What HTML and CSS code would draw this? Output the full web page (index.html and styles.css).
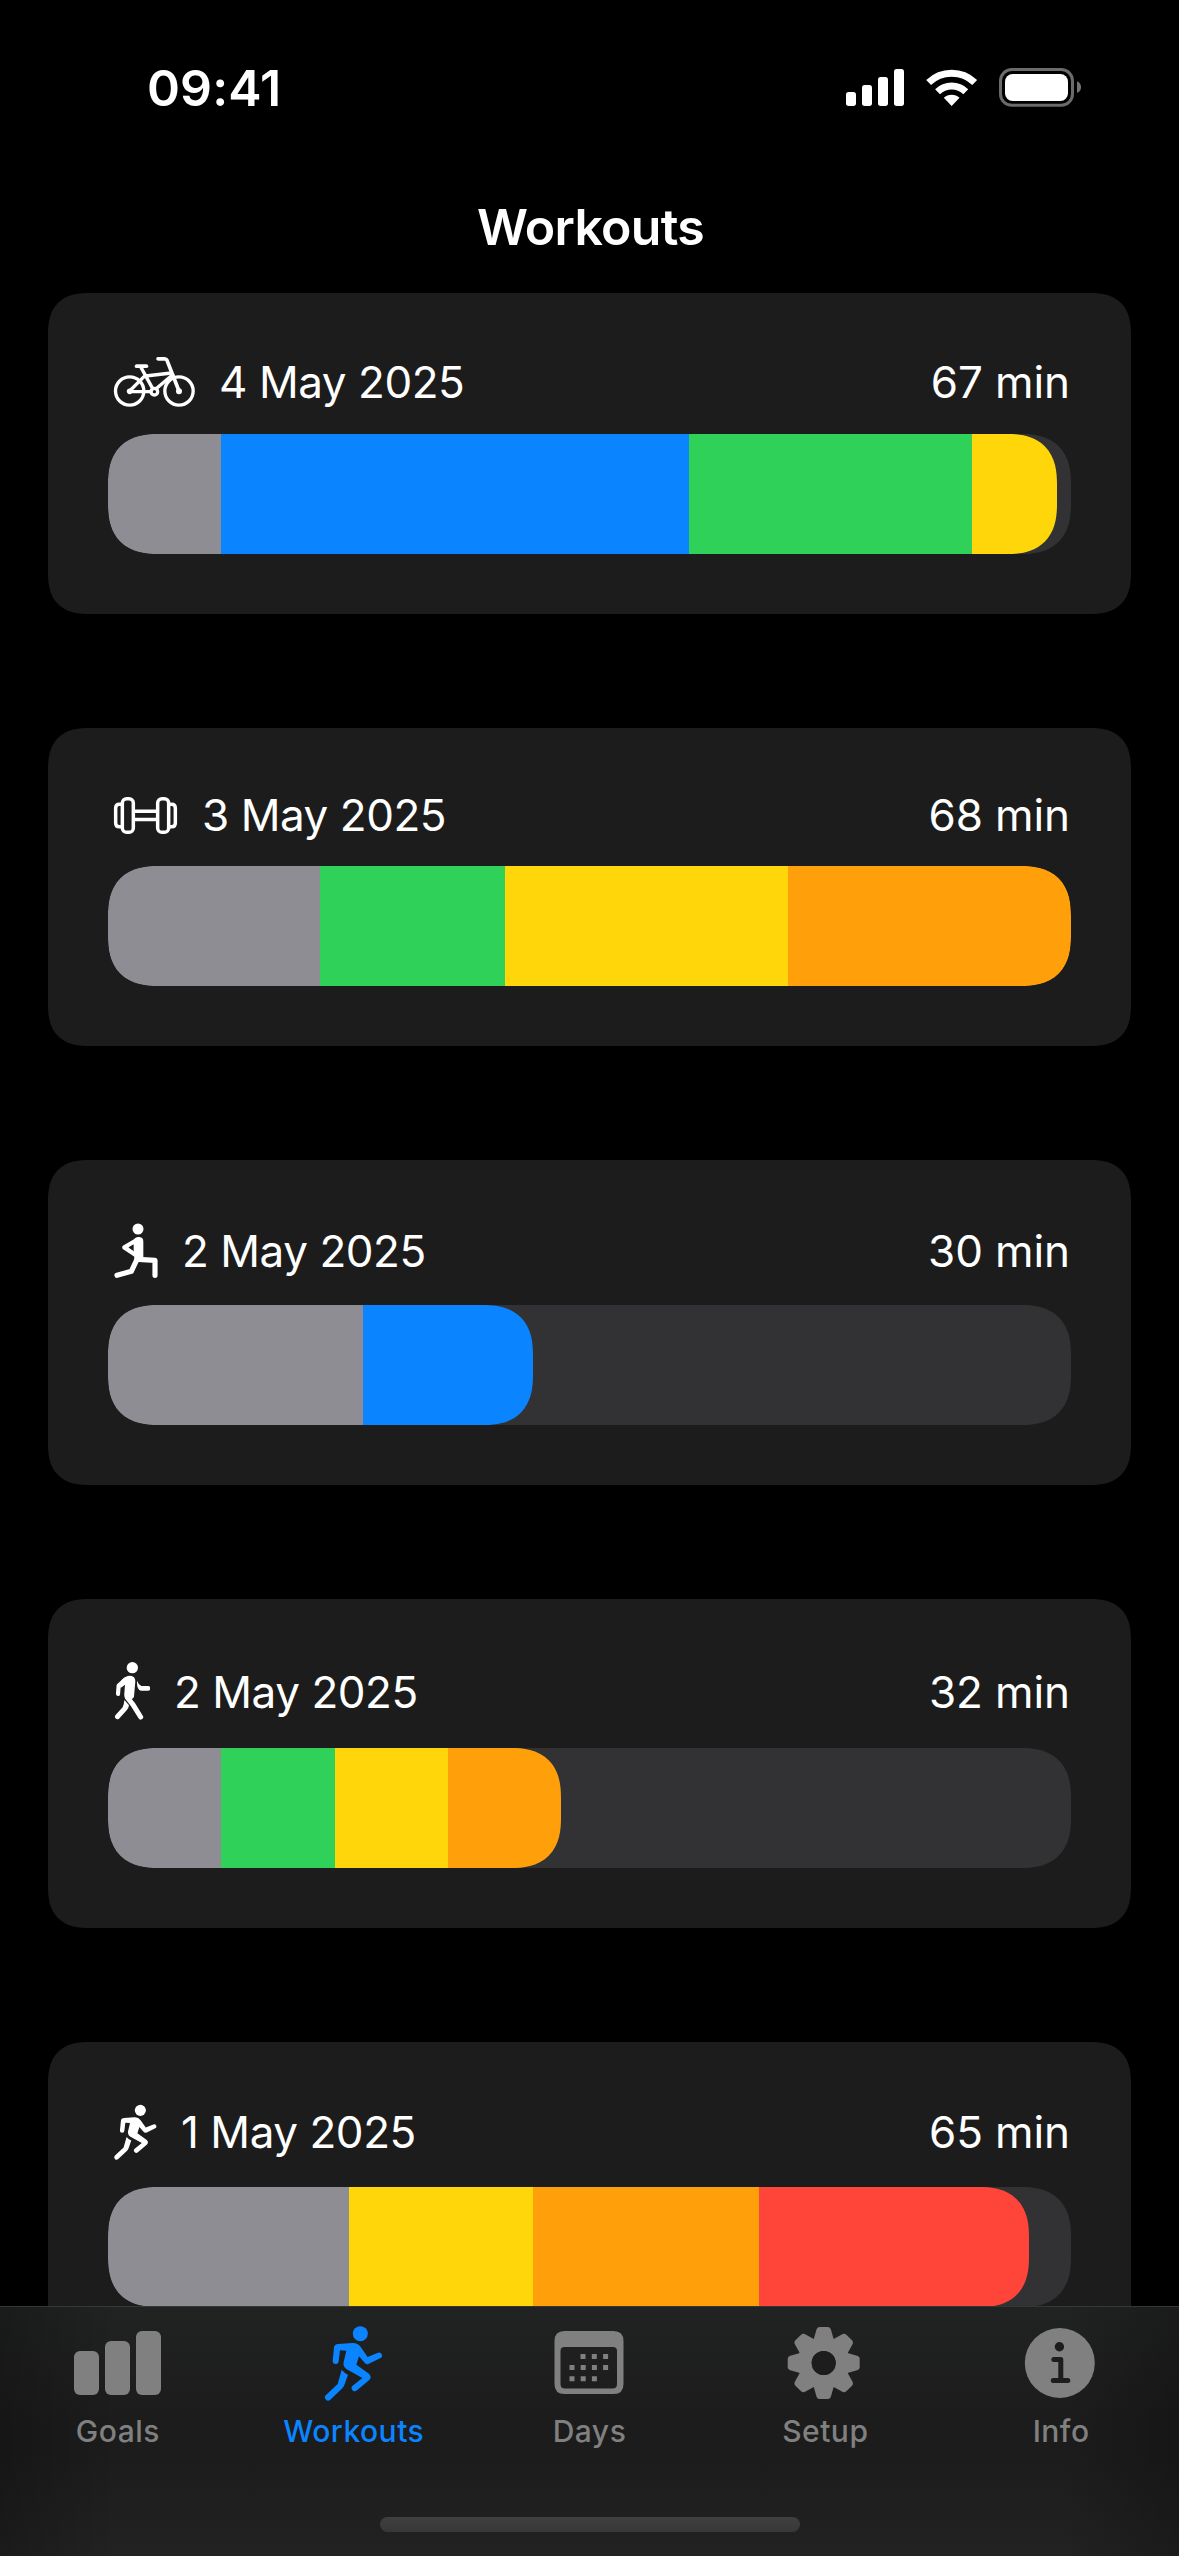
FILE: index.html
```html
<!DOCTYPE html>
<html lang="en">
<head>
<meta charset="utf-8">
<title>Workouts</title>
<link rel="stylesheet" href="styles.css">
</head>
<body>
<svg width="0" height="0" class="defs">
  <symbol id="runner" viewBox="768.6 36 199 248">
    <circle cx="900" cy="70" r="22.5"/>
    <path d="M817 152 L821 112 Q822 101 834 101 L876 98 Q892 97 901 110 L922 140 L953 127 a9 9 0 0 1 8 16 L924 161 Q918 163 913 157 L896 138 L888 163 L926 190 Q936 200 926 210 L890 240 a9.500 9.500 0 0 1 -13 -14 L906 203 L858 176 Q847 168 850 155 L858 121 L839 120 L835 152 a9 9 0 0 1 -18 0Z"/>
    <path d="M844 178 Q852 188 863 193 L853 222 Q851 229 846 234 L810 268 a9.500 9.500 0 0 1 -13 -14 L832 221Z"/>
  </symbol>
</svg>
<div class="screen">
  <header class="status">
    <span class="time">09:41</span>
    <svg class="indicators" viewBox="45 51 714 123">
      <g fill="#fff">
        <rect x="48" y="126" width="30" height="42" rx="8"/>
        <rect x="96" y="105" width="30" height="63" rx="8"/>
        <rect x="144" y="81" width="30" height="87" rx="8"/>
        <rect x="192" y="57" width="30" height="111" rx="8"/>
        <path d="M365 168 L341.400 143.500 A34 34 0 0 1 388.600 143.500Z"/>
        <rect x="525" y="72" width="189" height="81" rx="23"/>
      </g>
      <g fill="none" stroke="#fff" stroke-width="21">
        <path d="M295.900 97.500 A100 100 0 0 1 434.100 97.500"/>
        <path d="M322.600 125 A61 61 0 0 1 407.400 125"/>
      </g>
      <rect x="511.500" y="58.500" width="216" height="107.500" rx="34" fill="none" stroke="#6b6b6b" stroke-width="9"/>
      <path d="M741 94 Q753 99 753 111.500 T741 129Z" fill="#737373"/>
    </svg>
  </header>
  <h1 class="title">Workouts</h1>

  <main class="list">
    <section class="card">
      <div class="head">
        <svg class="bike" viewBox="204 219 261 171">
          <g fill="none" stroke="#fff" stroke-width="10" stroke-linecap="round" stroke-linejoin="round">
            <circle cx="269" cy="333" r="42.500"/><circle cx="417" cy="333" r="42.500"/>
            <circle cx="343" cy="335" r="10"/>
            <path d="M269 335 H333 M269 333 L315 287 M303 262 L338 326 M317 288 L394 279 M350 325 L398 284"/>
            <path d="M354 236.500 H374 Q379 236.500 381 241 L417 333" stroke-width="11"/>
            <path d="M290 258.500 H319" stroke-width="11.500"/>
          </g>
          <circle cx="269" cy="334" r="8.500" fill="#fff"/><circle cx="417" cy="334" r="9" fill="#fff"/>
        </svg>
        <span class="date">4 May 2025</span><span class="mins">67 min</span>
      </div>
      <div class="track"><div class="fill">
        <i class="gray" style="width:113.3px"></i><i class="blue" style="width:467.3px"></i><i class="green" style="width:283.3px"></i><i class="yellow" style="width:85px"></i>
      </div></div>
    </section>

    <section class="card">
      <div class="head">
        <svg class="dumbbell" viewBox="54 204 210 162">
          <g fill="none" stroke="#fff" stroke-width="10.500">
            <rect x="97" y="236" width="33" height="101" rx="13"/>
            <rect x="203" y="236" width="33" height="101" rx="13"/>
            <path d="M96 252.500 H88 Q77 252.500 77 264 V309 Q77 320.500 88 320.500 H96"/>
            <path d="M237 252.500 H245 Q256 252.500 256 264 V309 Q256 320.500 245 320.500 H237"/>
            <path d="M131 274 H202 M131 298.500 H202"/>
          </g>
        </svg>
        <span class="date">3 May 2025</span><span class="mins">68 min</span>
      </div>
      <div class="track"><div class="fill">
        <i class="gray" style="width:212.4px"></i><i class="green" style="width:184.3px"></i><i class="yellow" style="width:283.1px"></i><i class="orange" style="width:283.2px"></i>
      </div></div>
    </section>

    <section class="card">
      <div class="head">
        <svg class="lunge" viewBox="54 60 150 183">
          <g fill="none" stroke="#fff" stroke-width="15.500" stroke-linecap="round" stroke-linejoin="round">
            <path d="M142 176 L124 214 L81 226"/>
            <path d="M146 178 L195 181 V226"/>
            <path d="M143 119 L103 142 L137 165" stroke-width="13"/>
          </g>
          <path fill="#fff" d="M131 120 Q136 110 148 111 Q160 112 160 125 V180 L132 186 L133 171 L131 150 Z"/>
          <circle cx="144" cy="87" r="16.500" fill="#fff"/>
          <path fill="#1c1c1c" d="M117 142 L129 134.500 V151Z"/>
        </svg>
        <span class="date">2 May 2025</span><span class="mins">30 min</span>
      </div>
      <div class="track"><div class="fill">
        <i class="gray" style="width:254.9px"></i><i class="blue" style="width:170px"></i>
      </div></div>
    </section>

    <section class="card">
      <div class="head">
        <svg class="walk" viewBox="54 57 126 195">
          <g fill="none" stroke="#fff" stroke-width="14" stroke-linecap="round" stroke-linejoin="round">
            <path d="M84 162 L86 137 L107 118" stroke-width="12.500"/>
            <path d="M113 174 L129 194 L152 231" stroke-width="15"/>
          </g>
          <path fill="#fff" d="M94 121 Q106 107 120 107 Q136 108 136 124 L132 170 Q126 182 110 180 Q101 174 103 160 L105 134 L91 145 Z"/>
          <path fill="#fff" d="M142 124 Q145 134 154 138 H174 a7 7 0 0 1 0 14 H153 Q140 150 141 124Z"/>
          <path fill="#fff" d="M103 180 L117 196 Q116 205 110 211 L87 236 a7.500 7.500 0 0 1 -11 -10 L98 202 Q102 195 103 180Z"/>
          <circle cx="127" cy="83" r="17" fill="#fff"/>
        </svg>
        <span class="date">2 May 2025</span><span class="mins">32 min</span>
      </div>
      <div class="track"><div class="fill">
        <i class="gray" style="width:113.3px"></i><i class="green" style="width:113.3px"></i><i class="yellow" style="width:113.3px"></i><i class="orange" style="width:113.3px"></i>
      </div></div>
    </section>

    <section class="card">
      <div class="head raised">
        <svg class="run"><use href="#runner"/></svg>
        <span class="date">1 May 2025</span><span class="mins">65 min</span>
      </div>
      <div class="track"><div class="fill">
        <i class="gray" style="width:240.8px"></i><i class="yellow" style="width:184.1px"></i><i class="orange" style="width:226.6px"></i><i class="red" style="width:269.5px"></i>
      </div></div>
    </section>
  </main>

  <nav class="tabs">
    <a class="tab">
      <svg viewBox="76 2321 84 84">
        <rect x="74" y="2351" width="25" height="44" rx="6"/><rect x="105" y="2341" width="25" height="54" rx="6"/><rect x="136" y="2331" width="25" height="64" rx="6"/>
      </svg>
      <span>Goals</span>
    </a>
    <a class="tab active">
      <svg viewBox="755 32 252 252">
        <circle cx="900" cy="70" r="22.500"/>
        <path d="M817 152 L821 112 Q822 101 834 101 L876 98 Q892 97 901 110 L922 140 L953 127 a9 9 0 0 1 8 16 L924 161 Q918 163 913 157 L896 138 L888 163 L926 190 Q936 200 926 210 L890 240 a9.500 9.500 0 0 1 -13 -14 L906 203 L858 176 Q847 168 850 155 L858 121 L839 120 L835 152 a9 9 0 0 1 -18 0Z"/>
        <path d="M844 178 Q852 188 863 193 L853 222 Q851 229 846 234 L810 268 a9.500 9.500 0 0 1 -13 -14 L832 221Z"/>
      </svg>
      <span>Workouts</span>
    </a>
    <a class="tab">
      <svg viewBox="547.5 2321 84 84">
        <path fill-rule="evenodd" d="M565 2331 H614 Q624 2331 624 2341 V2384 Q624 2394 614 2394 H565 Q555 2394 555 2384 V2341 Q555 2331 565 2331Z M565 2347 Q561 2347 561 2351 V2384 Q561 2388.500 565.500 2388.500 H613 Q617.500 2388.500 617.500 2384 V2351 Q617.500 2347 613.500 2347Z"/>
        <path stroke-width="5" stroke="#808080" d="M581 2356.500h5m6.300 0h5m6.300 0h5 M570 2367.500h5m6.200 0h5m6.200 0h5m6.200 0h5 M570 2378.700h5m6.200 0h5m6.200 0h5"/>
      </svg>
      <span>Days</span>
    </a>
    <a class="tab">
      <svg viewBox="-40.7 -42 84 84">
        <path id="tooth" d="M-10.500 -22 L-7.500 -32.500 Q-6.800 -36 -4 -36 H4 Q6.800 -36 7.500 -32.500 L10.500 -22Z"/>
        <use href="#tooth" transform="rotate(45)"/><use href="#tooth" transform="rotate(90)"/><use href="#tooth" transform="rotate(135)"/><use href="#tooth" transform="rotate(180)"/><use href="#tooth" transform="rotate(225)"/><use href="#tooth" transform="rotate(270)"/><use href="#tooth" transform="rotate(315)"/>
        <circle r="19" fill="none" stroke="#808080" stroke-width="14"/>
        <circle r="12" class="hole"/>
      </svg>
      <span>Setup</span>
    </a>
    <a class="tab">
      <svg viewBox="1019.2 2321 84 84">
        <circle cx="1060" cy="2363" r="35"/>
        <circle cx="1059.600" cy="2346.700" r="4.700" class="hole"/>
        <path class="cut" d="M1054 2359.500 H1061 V2380.500 M1053.500 2380.500 H1068"/>
      </svg>
      <span>Info</span>
    </a>
    <div class="home"></div>
  </nav>
</div>
</body>
</html>
```

FILE: styles.css
```css
* { box-sizing: border-box; }
body {
  margin: 0;
  background: #000;
  color: #fff;
  font-family: Inter, "Liberation Sans", sans-serif;
}
svg { display: block; flex: none; }
.defs { display: none; }
.screen {
  width: 1179px;
  height: 2556px;
  display: flex;
  flex-direction: column;
  overflow: hidden;
}
.status {
  flex: none;
  height: 175px;
  padding: 0 96px 0 147px;
  display: flex;
  align-items: center;
  justify-content: space-between;
}
.time { font-size: 50px; font-weight: 600; letter-spacing: 0.1px; }
.indicators { width: 238px; height: 41px; }
.title {
  flex: none;
  margin: 0;
  height: 118px;
  padding: 22px 0 0 2px;
  font-size: 50px;
  font-weight: 600;
  line-height: 60px;
  letter-spacing: -0.7px;
  text-align: center;
}
.list {
  flex: 1;
  min-height: 0;
  overflow: hidden;
  padding: 0 48px;
  display: flex;
  flex-direction: column;
  gap: 114px;
}
.card {
  flex: none;
  padding: 60px;
  background: #1c1c1c;
  border-radius: 36px;
  display: flex;
  flex-direction: column;
  gap: 24px;
}
.head {
  display: flex;
  align-items: center;
  gap: 24px;
  font-size: 44px;
  font-weight: 370;
  line-height: 54px;
  white-space: nowrap;
}
.raised span { padding-bottom: 2px; }
.date { letter-spacing: -0.45px; }
.mins { margin-left: auto; margin-right: 1px; letter-spacing: -0.1px; }
.bike { width: 87px; height: 57px; }
.dumbbell { width: 70px; height: 54px; }
.lunge { width: 50px; height: 61px; }
.walk { width: 42px; height: 65px; }
.run { width: 49px; height: 61px; fill: #fff; }
.track { height: 120px; background: #323234; border-radius: 45px; overflow: hidden; }
.fill { display: flex; width: max-content; height: 120px; border-radius: 45px; overflow: hidden; }
@supports (corner-shape: superellipse(1.5)) {
  .card { border-radius: 42px; corner-shape: superellipse(1.35); }
  .track, .fill { border-radius: 50px; corner-shape: superellipse(1.3); }
}
.gray { background: #8e8d93; }
.blue { background: #0a84ff; }
.green { background: #30d158; }
.yellow { background: #ffd60a; }
.orange { background: #ff9f0a; }
.red { background: #ff453a; }
.tabs {
  flex: none;
  height: 250px;
  padding-top: 14px;
  border-top: 1px solid #363636;
  display: grid;
  grid-template-columns: repeat(5, 1fr);
  grid-template-rows: 196px 15px;
  justify-items: center;
  background:
    linear-gradient(90deg, rgba(0,0,0,.22), transparent 10%, transparent 90%, rgba(0,0,0,.22)),
    linear-gradient(#212222, #1b1c1b 45%, #1c1c1c 60%, #222);
}
.tab {
  display: flex;
  flex-direction: column;
  align-items: center;
  gap: 8px;
  color: #808080;
  font-size: 30px;
  font-weight: 480;
  line-height: 36px;
  letter-spacing: 0.5px;
}
.tab svg { width: 84px; height: 84px; fill: currentColor; overflow: visible; }
.tab .hole { fill: #1c1d1c; }
.tab .cut { fill: none; stroke: #1c1d1c; stroke-width: 5px; stroke-linecap: round; stroke-linejoin: round; }
.tab.active { color: #0a84ff; }
.home {
  grid-column: 1 / -1;
  width: 420px;
  height: 15px;
  border-radius: 8px;
  background: linear-gradient(#3f3f3f, #383838);
}
```
